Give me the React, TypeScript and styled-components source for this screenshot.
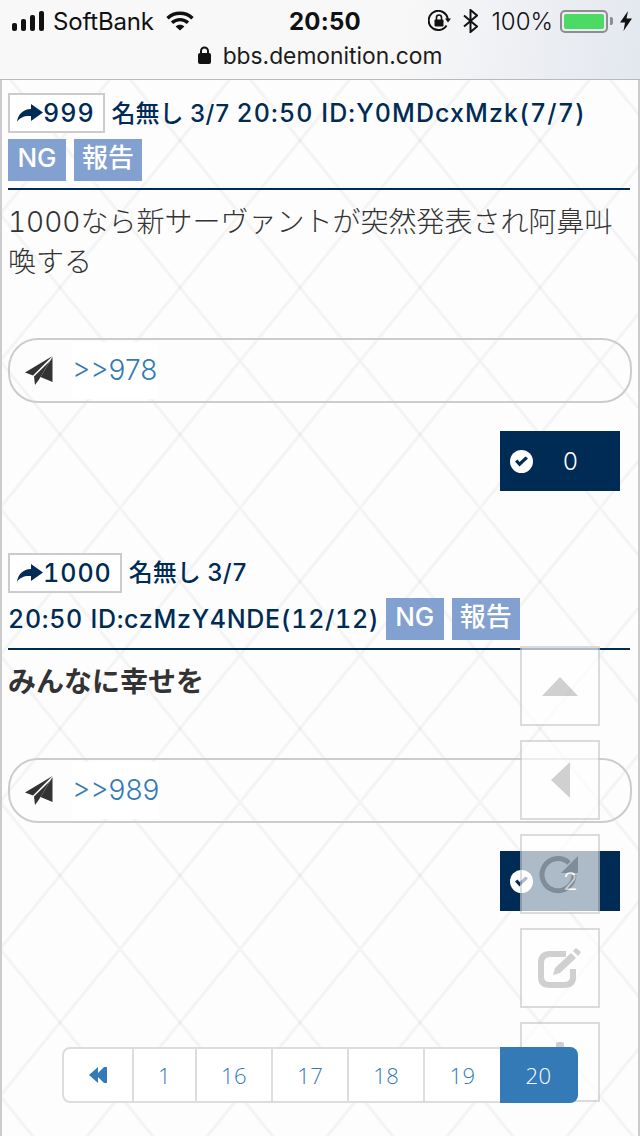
import React from "react";
import styled, { createGlobalStyle } from "styled-components";

const JP = `"Noto Sans CJK JP", sans-serif`;
const MIX = `Inter, "Noto Sans CJK JP", sans-serif`;
const NAVY = "#002b55";
const tile = `<svg xmlns='http://www.w3.org/2000/svg' width='120' height='147'><g stroke='#000' stroke-opacity='.035' stroke-width='3' fill='none'><path d='M-6 -7.35L126 154.35'/><path d='M126 -7.35L-6 154.35'/></g></svg>`;

const Global = createGlobalStyle`
  html, body { margin: 0; padding: 0; }
  body { width: 640px; height: 1136px; overflow: hidden; background: #fdfdfd; font-family: ${JP}; }
`;

const Screen = styled.div`
  position: relative;
  width: 640px;
  height: 1136px;
  overflow: hidden;
  background-color: #fdfdfd;
  background-image: url("data:image/svg+xml,${encodeURIComponent(tile)}");
  background-position: 0 67px;
  display: flex;
  flex-direction: column;
`;

const StatusBar = styled.header`
  height: 79px;
  flex: none;
  border-bottom: 1px solid #b9b9b9;
  background: linear-gradient(100deg, #f8f8f8 62%, #e3e7ef 100%);
  color: #111;
`;
const StatusRow = styled.div`
  height: 42px;
  display: grid;
  grid-template-columns: 277px auto 1fr;
  align-items: center;
  font-family: Inter, sans-serif;
`;
const StatusLeft = styled.div`
  display: flex;
  align-items: center;
  padding-left: 12px;
  font-size: 24px;
  letter-spacing: -0.2px;
`;
const Carrier = styled.span`
  margin: 0 12px 0 9px;
`;
const Clock = styled.div`
  font-size: 24px;
  font-weight: 700;
  letter-spacing: 0.2px;
  margin-left: 12px;
`;
const StatusRight = styled.div`
  display: flex;
  align-items: center;
  justify-content: flex-end;
  padding-right: 8px;
  font-size: 24px;
`;
const StatusGap = styled.span`
  width: 12px;
`;
const Percent = styled.span`
  margin: 0 7px 0 13px;
  font-weight: 300;
`;
const Battery = styled.div`
  width: 48px;
  height: 23px;
  box-sizing: border-box;
  border: 2px solid #8e8e8e;
  border-radius: 5px;
  padding: 2px;
  display: flex;
`;
const BatteryFill = styled.div`
  flex: 1;
  background: #4cd964;
  border-radius: 2px;
`;
const BatteryTip = styled.div`
  width: 3px;
  height: 8px;
  margin: 0 7px 0 2px;
  background: #8e8e8e;
  border-radius: 0 2px 2px 0;
`;
const UrlRow = styled.div`
  display: flex;
  justify-content: center;
  align-items: center;
  gap: 12px;
  height: 28px;
  margin-top: -1px;
  font-family: Inter, sans-serif;
  font-size: 22.8px;
  color: #1c1c1c;
`;

const Page = styled.main`
  flex: 1;
  border-left: 2px solid #ccc;
  border-right: 2px solid #ccc;
  padding: 13px 6px 0;
`;
const Post = styled.article`
  margin-bottom: 62px;
`;
const PostHead = styled.div<{ $tall?: boolean }>`
  color: ${NAVY};
  font-family: ${MIX};
  font-size: 24px;
  font-weight: 500;
  font-variant-numeric: tabular-nums;
  line-height: 40px;
  border-bottom: 2px solid ${NAVY};
  padding-bottom: ${(p) => (p.$tall ? 8 : 7)}px;
  margin-right: 2px;
`;
const Anchor = styled.span`
  display: inline-flex;
  align-items: center;
  height: 40px;
  box-sizing: border-box;
  border: 2px solid #ccc;
  padding: 0 8px 0 7px;
  margin-right: 7px;
  background: #fff;
  font-size: 25px;
  letter-spacing: 1px;
  vertical-align: top;
`;
const Stamp = styled.span<{ $spacing: number }>`
  white-space: nowrap;
  font-size: 25px;
  letter-spacing: ${(p) => p.$spacing}px;
`;
const Tag = styled.span`
  display: inline-block;
  min-width: 58px;
  box-sizing: border-box;
  height: 42px;
  line-height: 38px;
  padding: 0 8px;
  margin: 5px 8px 0 0;
  background: #82a0d0;
  color: #fff;
  font-size: 26px;
  text-align: center;
  vertical-align: 2px;
`;
const PostBody = styled.div<{ $bold?: boolean }>`
  margin-top: 12px;
  font-family: ${MIX};
  font-size: 28px;
  font-variant-numeric: tabular-nums;
  line-height: 40px;
  color: #333;
  font-weight: ${(p) => (p.$bold ? 700 : 300)};
`;
const Pill = styled.div`
  margin-top: 56px;
  height: 65px;
  box-sizing: border-box;
  border: 2px solid #ccc;
  border-radius: 30px;
  display: flex;
  align-items: center;
  padding-left: 15px;
`;
const ReplyLink = styled.a`
  margin-left: 19px;
  height: 57px;
  line-height: 57px;
  background: #fff;
  color: #337ab7;
  font-family: Inter, sans-serif;
  font-size: 28px;
  font-weight: 300;
`;
const Footer = styled.div`
  display: flex;
  justify-content: flex-end;
  margin: 28px 12px 0 0;
`;
const LikeButton = styled.div`
  width: 120px;
  height: 60px;
  background: ${NAVY};
  color: #fff;
  font-family: Inter, sans-serif;
  font-size: 24px;
  display: flex;
  align-items: center;
  padding-left: 10px;
  box-sizing: border-box;
`;
const LikeCount = styled.span`
  margin-left: 30px;
  font-weight: 300;
`;

const Floats = styled.nav`
  position: absolute;
  left: 520px;
  top: 646px;
  display: flex;
  flex-direction: column;
  gap: 14px;
`;
const FloatButton = styled.div`
  width: 80px;
  height: 80px;
  box-sizing: border-box;
  border: 2px solid #ccc;
  background: #fff;
  opacity: 0.68;
  display: flex;
  align-items: center;
  justify-content: center;
  color: #bbb;
`;
const Pager = styled.nav`
  position: absolute;
  left: 62px;
  top: 1047px;
  display: flex;
  height: 56px;
  box-sizing: border-box;
  background: #fff;
  border: 2px solid #ddd;
  border-radius: 8px;
`;
const PageCell = styled.div<{ $active?: boolean; $first?: boolean }>`
  display: flex;
  align-items: center;
  justify-content: center;
  box-sizing: border-box;
  padding: 0 ${(p) => (p.$first ? 25 : p.$active ? 26 : 24)}px;
  margin: ${(p) => (p.$active ? "-2px -2px -2px 0" : "0")};
  border-left: ${(p) => (p.$first || p.$active ? "none" : "2px solid #ddd")};
  border-radius: ${(p) => (p.$active ? "0 8px 8px 0" : "0")};
  background: ${(p) => (p.$active ? "#337ab7" : "transparent")};
  color: ${(p) => (p.$active ? "#fff" : "#337ab7")};
  font-size: 22px;
  letter-spacing: 0.5px;
  font-weight: 300;
  font-family: "Open Sans", sans-serif;
`;

const SignalIcon = () => (
  <svg width="32" height="20" viewBox="0 0 32 20" fill="#111">
    <rect x="0" y="12" width="5" height="8" rx="2" />
    <rect x="9" y="8" width="5" height="12" rx="2" />
    <rect x="18" y="4" width="5" height="16" rx="2" />
    <rect x="27" y="0" width="5" height="20" rx="2" />
  </svg>
);
const WifiIcon = () => (
  <svg width="28" height="20" viewBox="0 0 28 20" fill="none" stroke="#111" strokeWidth="3.4">
    <path d="M1.5 7.2C8.5 .6 19.5 .6 26.5 7.2" />
    <path d="M6 11.8C10.5 7.6 17.5 7.6 22 11.8" />
    <path d="M14 19.6L9.6 15.4C12 13.2 16 13.2 18.4 15.4Z" fill="#111" stroke="none" />
  </svg>
);
const RotationIcon = () => (
  <svg width="23" height="22" viewBox="0 0 23 22" fill="none" stroke="#111" strokeWidth="2">
    <path d="M18.5 15.5A9.6 9.6 0 1 1 19.8 9" />
    <path d="M17 8.5H23L20 12.5Z" fill="#111" stroke="none" />
    <rect x="6.5" y="9.5" width="9" height="7" rx="1" fill="#111" stroke="none" />
    <path d="M8.5 10V7.5A2.5 2.5 0 0 1 13.5 7.5V10" strokeWidth="1.6" />
  </svg>
);
const BluetoothIcon = () => (
  <svg width="15" height="24" viewBox="0 0 15 24" fill="none" stroke="#111" strokeWidth="2">
    <path d="M1 6.5L14 17.5L7.5 23V1L14 6.5L1 17.5" />
  </svg>
);
const BoltIcon = () => (
  <svg width="12" height="20" viewBox="0 0 12 20" fill="#111">
    <path d="M8 0L0 11.5H5L3.5 20L12 7.5H6.5Z" />
  </svg>
);
const LockIcon = () => (
  <svg width="13" height="18" viewBox="0 0 13 18" fill="none" stroke="#111" strokeWidth="2">
    <path d="M3 8V5A3.5 3.5 0 0 1 10 5V8" />
    <rect x="0" y="7" width="13" height="11" rx="2" fill="#111" stroke="none" />
  </svg>
);
const ShareIcon = () => (
  <svg width="26" height="18" viewBox="0 0 26 18" fill={NAVY}>
    <path d="M14 0L26 8.5L14 17V12C8 11.5 3 13 0 18C1 10 6 5.5 14 5Z" />
  </svg>
);
const PlaneIcon = () => (
  <svg width="28" height="29" viewBox="0 0 28 29" fill="#333">
    <path d="M27.5 0L0 16.5L8 19.5Z" />
    <path d="M9 20.5L10 29L14 23.5L25 5Z" />
    <path d="M27.5 1L15.5 21L27.5 26Z" />
  </svg>
);
const CheckIcon = () => (
  <svg width="23" height="23" viewBox="0 0 23 23">
    <circle cx="11.5" cy="11.5" r="11.5" fill="#fff" />
    <path d="M5 11.5L9.5 16.5L18 8.5L15.5 6.5L9.5 12L7.5 9.5Z" fill={NAVY} />
  </svg>
);
const UpTriangle = () => (
  <svg width="36" height="19" viewBox="0 0 36 19" fill="currentColor">
    <path d="M18 0L36 19H0Z" />
  </svg>
);
const LeftTriangle = () => (
  <svg width="19" height="36" viewBox="0 0 19 36" fill="currentColor">
    <path d="M0 18L19 0V36Z" />
  </svg>
);
const RepeatIcon = () => (
  <svg width="44" height="42" viewBox="0 0 44 42" fill="none" stroke="currentColor" strokeWidth="5">
    <path d="M31 10A16 16 0 1 0 36 22" />
    <path d="M40 3V20H23Z" fill="currentColor" stroke="none" />
  </svg>
);
const EditIcon = () => (
  <svg width="44" height="42" viewBox="0 0 44 42" fill="none" stroke="currentColor" strokeWidth="6">
    <path d="M28 7H12Q3 7 3 16V30Q3 38 12 38H26Q35 38 35 30V22" />
    <path d="M15 28L17 21L33 6L38 11L22 26Z" fill="currentColor" stroke="none" />
    <path d="M35 4L38 1L43 5L40 9Z" fill="currentColor" stroke="none" />
  </svg>
);
const PinIcon = () => (
  <svg width="44" height="44" viewBox="0 0 44 44" fill="currentColor">
    <rect x="18" y="2" width="8" height="20" rx="2" />
  </svg>
);
const BackIcon = () => (
  <svg width="18" height="16" viewBox="0 0 18 16" fill="#337ab7">
    <path d="M0 8L9 0V16Z" />
    <path d="M7 8L15 0H18V16H15Z" />
  </svg>
);

const posts = [
  {
    no: "999",
    stamp: "20:50 ID:Y0MDcxMzk(7/7)",
    spacing: 1.1,
    breakStamp: false,
    body: "1000なら新サーヴァントが突然発表され阿鼻叫喚する",
    bold: false,
    reply: ">>978",
    count: 0,
  },
  {
    no: "1000",
    stamp: "20:50 ID:czMzY4NDE(12/12)",
    spacing: 0.7,
    breakStamp: true,
    body: "みんなに幸せを",
    bold: true,
    reply: ">>989",
    count: 2,
  },
];

export default function App() {
  return (
    <Screen>
      <Global />
      <StatusBar>
        <StatusRow>
          <StatusLeft>
            <SignalIcon />
            <Carrier>SoftBank</Carrier>
            <WifiIcon />
          </StatusLeft>
          <Clock>20:50</Clock>
          <StatusRight>
            <RotationIcon />
            <StatusGap />
            <BluetoothIcon />
            <Percent>100%</Percent>
            <Battery>
              <BatteryFill />
            </Battery>
            <BatteryTip />
            <BoltIcon />
          </StatusRight>
        </StatusRow>
        <UrlRow>
          <LockIcon />
          <span>bbs.demonition.com</span>
        </UrlRow>
      </StatusBar>
      <Page>
        {posts.map((p) => (
          <Post key={p.no}>
            <PostHead $tall={p.breakStamp}>
              <Anchor>
                <ShareIcon />
                {p.no}
              </Anchor>
              名無し 3/7 {p.breakStamp && <br />}
              <Stamp $spacing={p.spacing}>{p.stamp}</Stamp> <Tag>NG</Tag>
              <Tag>報告</Tag>
            </PostHead>
            <PostBody $bold={p.bold}>{p.body}</PostBody>
            <Pill>
              <PlaneIcon />
              <ReplyLink>{p.reply}</ReplyLink>
            </Pill>
            <Footer>
              <LikeButton>
                <CheckIcon />
                <LikeCount>{p.count}</LikeCount>
              </LikeButton>
            </Footer>
          </Post>
        ))}
      </Page>
      <Floats>
        <FloatButton><UpTriangle /></FloatButton>
        <FloatButton><LeftTriangle /></FloatButton>
        <FloatButton><RepeatIcon /></FloatButton>
        <FloatButton><EditIcon /></FloatButton>
        <FloatButton><PinIcon /></FloatButton>
      </Floats>
      <Pager>
        <PageCell $first><BackIcon /></PageCell>
        {["1", "16", "17", "18", "19"].map((n) => (
          <PageCell key={n}>{n}</PageCell>
        ))}
        <PageCell $active>20</PageCell>
      </Pager>
    </Screen>
  );
}
